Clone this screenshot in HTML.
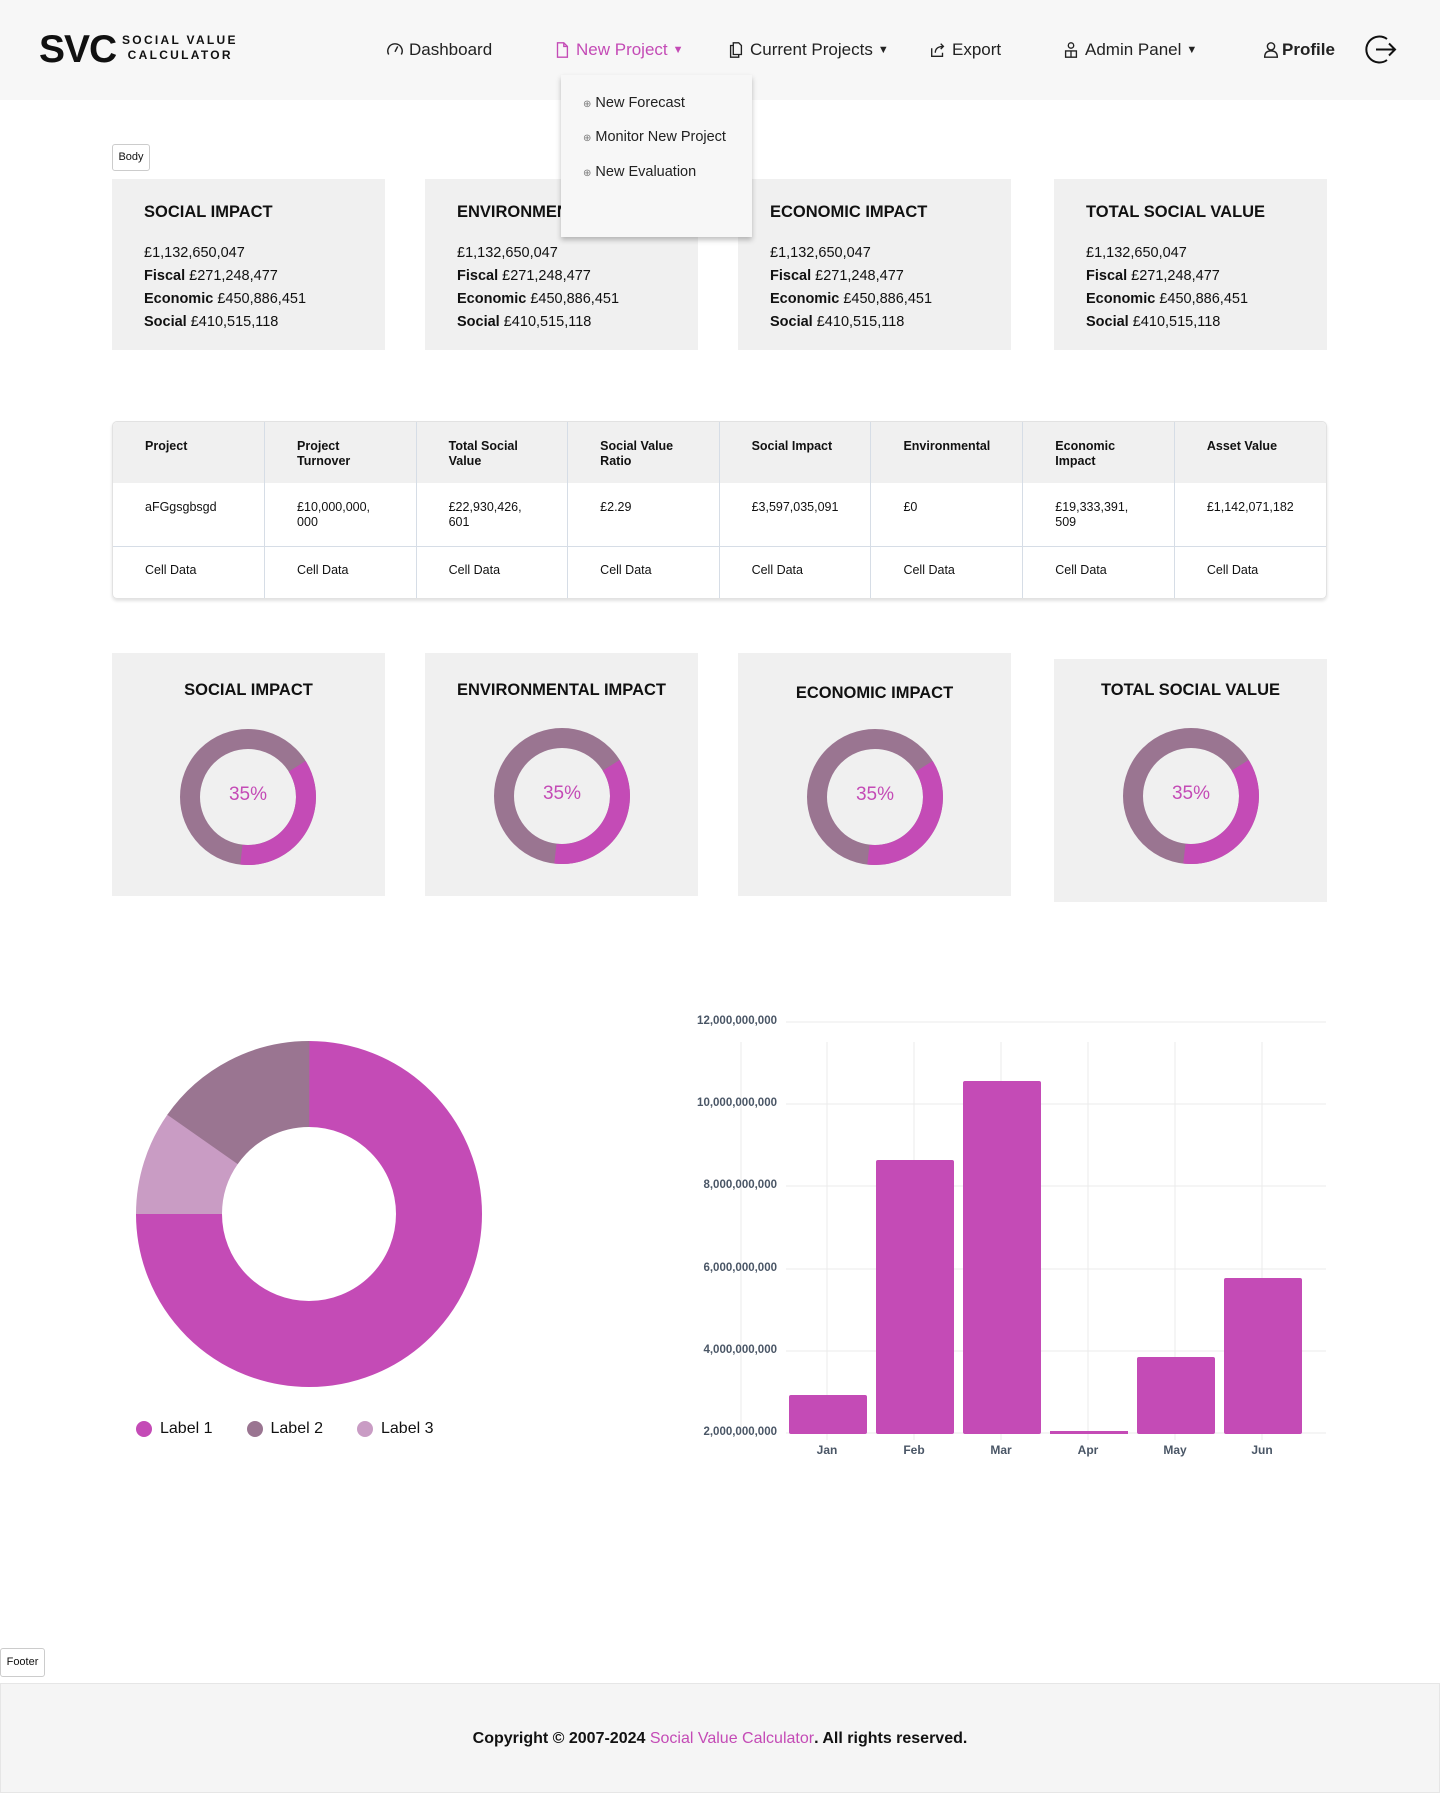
<!DOCTYPE html>
<html><head><meta charset="utf-8"><style>
*{box-sizing:border-box;margin:0;padding:0}
body{width:1440px;height:1793px;position:relative;background:#fff;font-family:"Liberation Sans",sans-serif;color:#111;overflow:hidden}
.a{position:absolute}
.hdr{left:0;top:0;width:1440px;height:100px;background:#f7f7f7}
.nav{top:40px;font-size:17px;color:#222;display:flex;align-items:center;gap:5px;white-space:nowrap}
.nav svg{width:18px;height:18px}
.card{background:#f0f0f0;width:273px}
.card h3{position:absolute;left:32px;top:24px;font-size:16.5px;font-weight:700}
.card p{position:absolute;left:32px;font-size:14.5px}
table{border-collapse:collapse;width:100%;font-size:12.5px}
th,td{text-align:left;vertical-align:top;padding:17px 32px 0 32px;border-left:1px solid #d6dde6;width:12.5%}
th:first-child,td:first-child{border-left:none}
th{background:#f0f0f0;height:61px;font-weight:700;line-height:15px}
td{height:63px;line-height:15px}
tr.r2 td{border-top:1px solid #d6dde6;height:52px;padding-top:16px}
.dc{background:#f0f0f0;width:273px;height:243px}
.dc h3{position:absolute;width:100%;text-align:center;font-size:16.5px;font-weight:700}
.yl{font-size:11.5px;color:#4a5666;font-weight:700;text-align:right;width:120px;left:657px}
.ml{font-size:12px;color:#4a5666;font-weight:700;width:60px;text-align:center;top:1443px}
.dd{position:absolute;left:583px;font-size:14.5px;color:#222;white-space:nowrap}
.dd span{font-size:10px;color:#777}
</style></head><body>
<div class="a hdr"></div>
<div class="a" style="left:39px;top:28px;font-size:39px;font-weight:700;letter-spacing:-1px">SVC</div>
<div class="a" style="left:122px;top:33px;font-size:12px;font-weight:700;letter-spacing:2.3px;line-height:15px">SOCIAL VALUE<br>&nbsp;CALCULATOR</div>

<div class="a nav" style="left:386px"><svg viewBox="0 0 20 20" fill="none" stroke="#222" stroke-width="1.6"><path d="M3 15A8 8 0 1 1 17 15"/><path d="M10 12L13 6"/></svg>Dashboard</div>
<div class="a nav" style="left:553px;color:#c44bb6"><svg viewBox="0 0 20 20" fill="none" stroke="#c44bb6" stroke-width="1.5"><path d="M5 2h7l4 4v12H5z"/><path d="M12 2v4h4"/></svg>New Project<span style="font-size:11px">▼</span></div>
<div class="a nav" style="left:727px"><svg viewBox="0 0 20 20" fill="none" stroke="#222" stroke-width="1.5"><path d="M7 2h6l3 3v10H7z"/><path d="M7 5H4v13h9v-3"/></svg>Current Projects<span style="font-size:11px">▼</span></div>
<div class="a nav" style="left:929px"><svg viewBox="0 0 20 20" fill="none" stroke="#222" stroke-width="1.5"><path d="M3 8v9h12v-4"/><path d="M7 13c0-5 4-7 9-7M13 3l3 3-3 3"/></svg>Export</div>
<div class="a nav" style="left:1062px"><svg viewBox="0 0 20 20" fill="none" stroke="#222" stroke-width="1.5"><circle cx="10" cy="5" r="3"/><path d="M4 18v-7h12v7zM10 11v7"/></svg>Admin Panel<span style="font-size:11px">▼</span></div>
<div class="a nav" style="left:1262px;font-weight:700;gap:2px"><svg viewBox="0 0 20 20" fill="none" stroke="#222" stroke-width="1.6"><circle cx="10" cy="6" r="4"/><path d="M3 18c0-5 3-7 7-7s7 2 7 7z"/></svg>Profile</div>
<svg class="a" style="left:1365px;top:33px" width="33" height="33" viewBox="0 0 33 33" fill="none" stroke="#111" stroke-width="2"><path d="M22 6A13 13 0 1 0 22 27"/><path d="M11 16.5h19M24 10.5l6 6-6 6"/></svg>

<div class="a" style="left:112px;top:144px;width:38px;height:27px;border:1px solid #ccc;border-radius:3px;font-size:11px;line-height:25px;text-align:center;background:#fff">Body</div>

<div class="a card" style="left:112px;top:179px;height:171px"><h3>SOCIAL IMPACT</h3><p style="top:66px">£1,132,650,047</p><p style="top:89px"><b>Fiscal</b> £271,248,477</p><p style="top:112px"><b>Economic</b> £450,886,451</p><p style="top:135px"><b>Social</b> £410,515,118</p></div>
<div class="a card" style="left:425px;top:179px;height:171px"><h3>ENVIRONMENTAL IMPACT</h3><p style="top:66px">£1,132,650,047</p><p style="top:89px"><b>Fiscal</b> £271,248,477</p><p style="top:112px"><b>Economic</b> £450,886,451</p><p style="top:135px"><b>Social</b> £410,515,118</p></div>
<div class="a card" style="left:738px;top:179px;height:171px"><h3>ECONOMIC IMPACT</h3><p style="top:66px">£1,132,650,047</p><p style="top:89px"><b>Fiscal</b> £271,248,477</p><p style="top:112px"><b>Economic</b> £450,886,451</p><p style="top:135px"><b>Social</b> £410,515,118</p></div>
<div class="a card" style="left:1054px;top:179px;height:171px"><h3>TOTAL SOCIAL VALUE</h3><p style="top:66px">£1,132,650,047</p><p style="top:89px"><b>Fiscal</b> £271,248,477</p><p style="top:112px"><b>Economic</b> £450,886,451</p><p style="top:135px"><b>Social</b> £410,515,118</p></div>

<div class="a" style="left:561px;top:75px;width:191px;height:162px;background:#f7f7f7;box-shadow:0 3px 5px rgba(0,0,0,.25)"></div>
<div class="dd" style="top:95px"><span>⊕</span> New Forecast</div>
<div class="dd" style="top:129px"><span>⊕</span> Monitor New Project</div>
<div class="dd" style="top:164px"><span>⊕</span> New Evaluation</div>

<div class="a" style="left:112px;top:421px;width:1215px;border:1px solid #e2e2e2;border-radius:5px;overflow:hidden;box-shadow:0 2px 3px rgba(0,0,0,.12)">
<table><tr><th>Project</th><th>Project Turnover</th><th>Total Social Value</th><th>Social Value Ratio</th><th>Social Impact</th><th>Environmental</th><th>Economic Impact</th><th>Asset Value</th></tr>
<tr><td>aFGgsgbsgd</td><td>£10,000,000, 000</td><td>£22,930,426, 601</td><td>£2.29</td><td>£3,597,035,091</td><td>£0</td><td>£19,333,391, 509</td><td>£1,142,071,182</td></tr>
<tr class="r2"><td>Cell Data</td><td>Cell Data</td><td>Cell Data</td><td>Cell Data</td><td>Cell Data</td><td>Cell Data</td><td>Cell Data</td><td>Cell Data</td></tr></table></div>

<div class="a dc" style="left:112px;top:653px"><h3 style="top:28px">SOCIAL IMPACT</h3></div>
<div class="a dc" style="left:425px;top:653px"><h3 style="top:28px">ENVIRONMENTAL IMPACT</h3></div>
<div class="a dc" style="left:738px;top:653px"><h3 style="top:31px">ECONOMIC IMPACT</h3></div>
<div class="a dc" style="left:1054px;top:659px"><h3 style="top:22px">TOTAL SOCIAL VALUE</h3></div>
<svg class="a" style="left:0;top:0" width="1440" height="1000">
<g fill="none" stroke-width="20">
<circle cx="248" cy="797" r="58" stroke="#9a7591"/><circle cx="248" cy="797" r="58" stroke="#c44bb6" stroke-dasharray="130 400" transform="rotate(-32 248 797)"/>
<circle cx="562" cy="796" r="58" stroke="#9a7591"/><circle cx="562" cy="796" r="58" stroke="#c44bb6" stroke-dasharray="130 400" transform="rotate(-32 562 796)"/>
<circle cx="875" cy="797" r="58" stroke="#9a7591"/><circle cx="875" cy="797" r="58" stroke="#c44bb6" stroke-dasharray="130 400" transform="rotate(-32 875 797)"/>
<circle cx="1191" cy="796" r="58" stroke="#9a7591"/><circle cx="1191" cy="796" r="58" stroke="#c44bb6" stroke-dasharray="130 400" transform="rotate(-32 1191 796)"/>
</g>
<g font-family="Liberation Sans" font-size="19" fill="#c44bb6" text-anchor="middle"><text x="248" y="800">35%</text><text x="562" y="799">35%</text><text x="875" y="800">35%</text><text x="1191" y="799">35%</text></g>
</svg>

<svg class="a" style="left:0;top:1000px" width="1440" height="480">
<g fill="none" stroke-width="86">
<circle cx="309" cy="214" r="130" stroke="#c44bb6" stroke-dasharray="612.6 1000" transform="rotate(-90 309 214)"/>
<circle cx="309" cy="214" r="130" stroke="#c99cc4" stroke-dasharray="80 1000" transform="rotate(180 309 214)"/>
<circle cx="309" cy="214" r="130" stroke="#9a7591" stroke-dasharray="125 1000" transform="rotate(215 309 214)"/>
</g>
<g stroke="#ebebeb" stroke-width="1">
<line x1="786" y1="22" x2="1326" y2="22"/><line x1="786" y1="104" x2="1326" y2="104"/><line x1="786" y1="186" x2="1326" y2="186"/><line x1="786" y1="269" x2="1326" y2="269"/><line x1="786" y1="351" x2="1326" y2="351"/><line x1="786" y1="433" x2="1326" y2="433"/>
<line x1="741" y1="42" x2="741" y2="433"/><line x1="827" y1="42" x2="827" y2="440"/><line x1="914" y1="42" x2="914" y2="440"/><line x1="1001" y1="42" x2="1001" y2="440"/><line x1="1088" y1="42" x2="1088" y2="440"/><line x1="1175" y1="42" x2="1175" y2="440"/><line x1="1262" y1="42" x2="1262" y2="440"/>
</g>
<g fill="#c44bb6">
<rect x="789" y="395" width="78" height="39" rx="2"/><rect x="876" y="160" width="78" height="274" rx="2"/><rect x="963" y="81" width="78" height="353" rx="2"/><rect x="1050" y="431" width="78" height="3"/><rect x="1137" y="357" width="78" height="77" rx="2"/><rect x="1224" y="278" width="78" height="156" rx="2"/>
</g>
</svg>
<div class="a yl" style="top:1015px">12,000,000,000</div>
<div class="a yl" style="top:1097px">10,000,000,000</div>
<div class="a yl" style="top:1179px">8,000,000,000</div>
<div class="a yl" style="top:1262px">6,000,000,000</div>
<div class="a yl" style="top:1344px">4,000,000,000</div>
<div class="a yl" style="top:1426px">2,000,000,000</div>
<div class="a ml" style="left:797px">Jan</div><div class="a ml" style="left:884px">Feb</div><div class="a ml" style="left:971px">Mar</div><div class="a ml" style="left:1058px">Apr</div><div class="a ml" style="left:1145px">May</div><div class="a ml" style="left:1232px">Jun</div>

<div class="a" style="left:136px;top:1420px;font-size:16px;display:flex;align-items:center;gap:0">
<span style="width:16px;height:16px;border-radius:50%;background:#c44bb6;margin-right:8px"></span>Label 1
<span style="width:16px;height:16px;border-radius:50%;background:#9a7591;margin:0 8px 0 34px"></span>Label 2
<span style="width:16px;height:16px;border-radius:50%;background:#c99cc4;margin:0 8px 0 34px"></span>Label 3</div>

<div class="a" style="left:0;top:1648px;width:45px;height:29px;border:1px solid #ccc;border-radius:3px;font-size:11px;line-height:27px;text-align:center;background:#fff">Footer</div>
<div class="a" style="left:0;top:1683px;width:1440px;height:110px;background:#f5f5f5;border:1px solid #e6e6e6"></div>
<div class="a" style="left:0;top:1730px;width:1440px;text-align:center;font-size:16px;font-weight:700">Copyright © 2007-2024 <span style="color:#c44bb6;font-weight:400">Social Value Calculator</span>. All rights reserved.</div>
</body></html>
